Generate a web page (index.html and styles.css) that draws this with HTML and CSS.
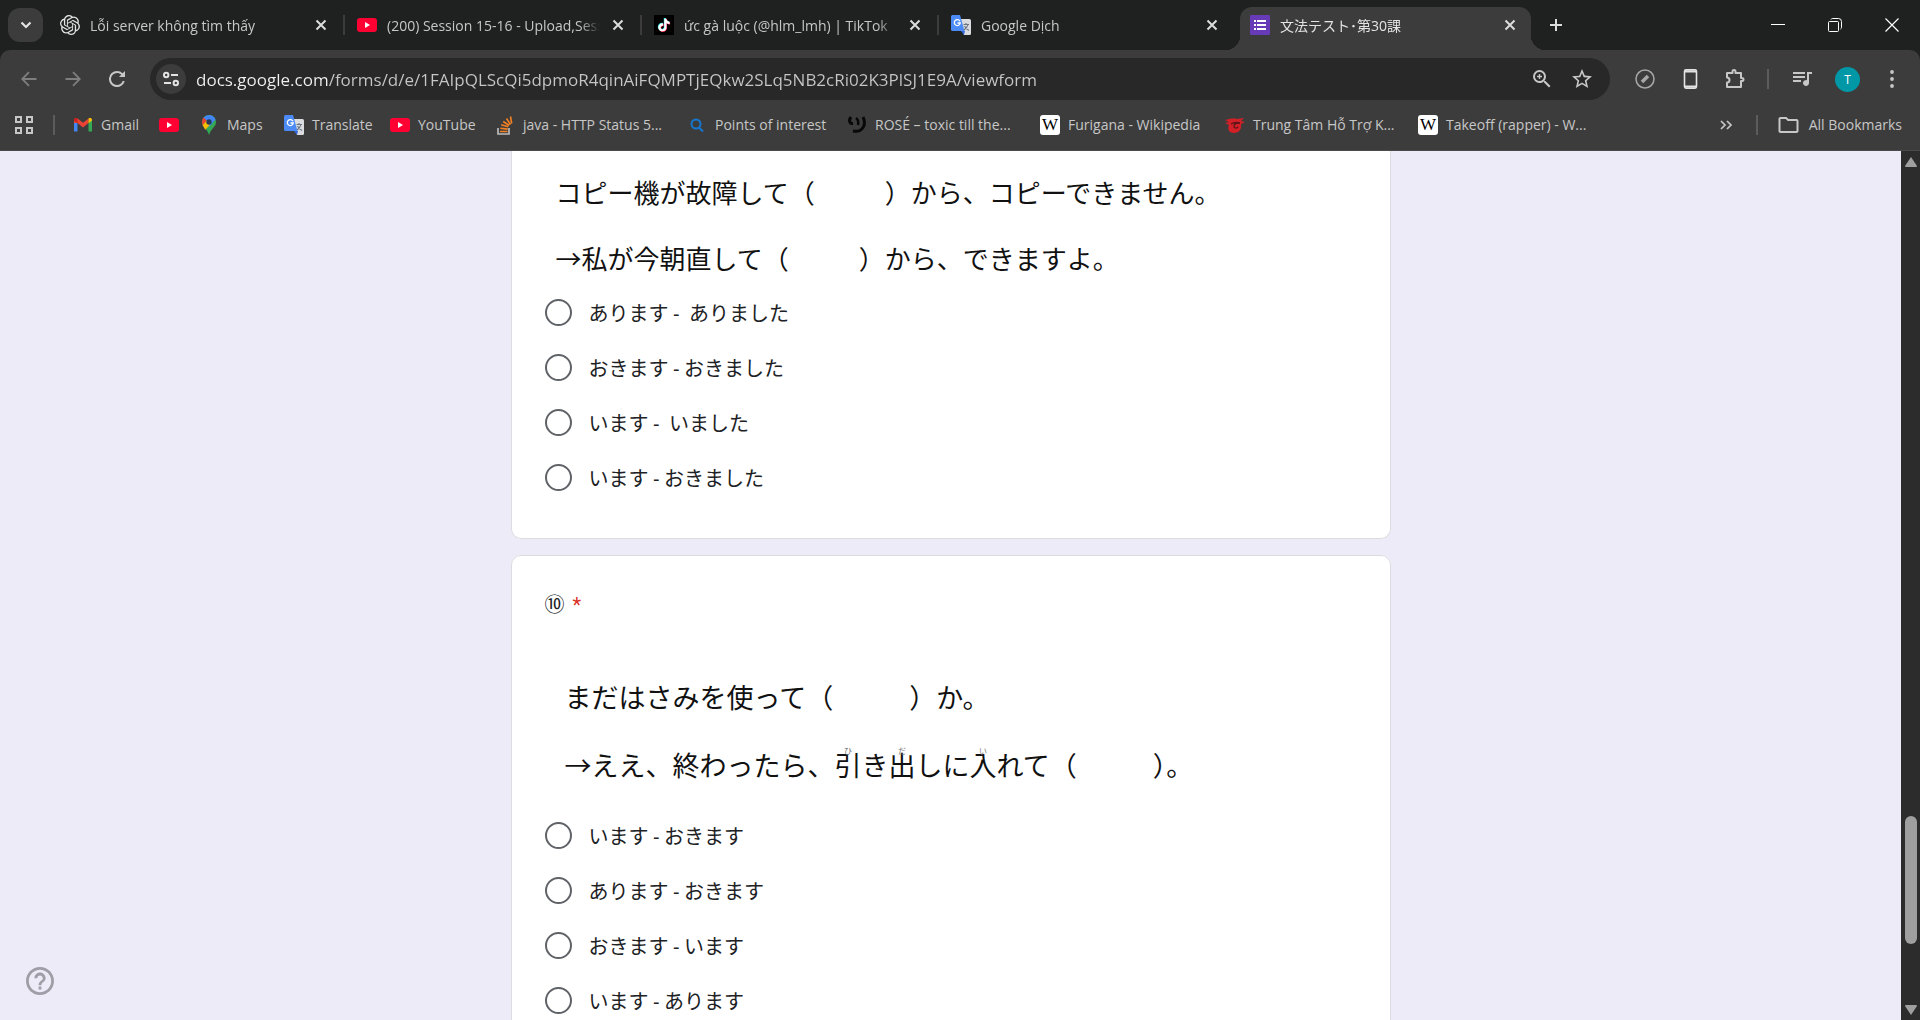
FILE: index.html
```html
<!DOCTYPE html>
<html lang="ja">
<head>
<meta charset="utf-8">
<meta name="viewport" content="width=device-width, initial-scale=1">
<title>文法テスト･第30課</title>
<link rel="stylesheet" href="styles.css">
</head>
<body>
<svg class="sprite" aria-hidden="true">
  <symbol id="close" viewBox="0 0 12 12"><path d="M1.500 1.500l9 9M10.500 1.500l-9 9" stroke="currentColor" stroke-width="2" fill="none"/></symbol>
  <symbol id="youtube" viewBox="0 0 20 20"><rect y="3" width="20" height="14" rx="3" fill="#ff0033"/><path d="M8 7l5 3-5 3z" fill="#fff"/></symbol>
  <symbol id="translate" viewBox="0 0 20 20"><path d="M8 4h10.500a1.500 1.500 0 0 1 1.500 1.500v13a1.500 1.500 0 0 1-1.500 1.500H13z" fill="#dadce0"/><path d="M10 16h4l-1 4z" fill="#3367d6"/><path d="M1.500 0H9l4.500 16h-12A1.500 1.500 0 0 1 0 14.500v-13A1.500 1.500 0 0 1 1.500 0z" fill="#4c8bf5"/><path d="M9 6.200A3 3 0 1 0 9.300 8H6.500" fill="none" stroke="#fff" stroke-width="1.300"/><path d="M12.500 9.500h5.500M15 8v1.500M17 9.500c-.5 2.500-2 4-4 5.500M13.500 11c1 2 2.500 3.500 4.500 4.500" fill="none" stroke="#6b7580" stroke-width="1.100"/></symbol>
  <symbol id="note" viewBox="0 0 24 24"><path fill="currentColor" d="M12.525 0h3.900c.1 1.500.650 3.100 1.760 4.200 1.100 1.100 2.700 1.600 4.240 1.800v4c-1.440 0-2.900-.35-4.200-1-.57-.250-1.100-.6-1.620-.9v8.750c-.1 1.400-.55 2.800-1.350 3.900-1.300 1.900-3.600 3.200-5.900 3.200-1.400.1-2.860-.3-4.100-1-2-1.200-3.400-3.400-3.650-5.700v-1.500c.2-1.900 1.100-3.700 2.600-5 1.650-1.400 4-2.100 6.150-1.700v4.400c-1-.3-2.150-.2-3 .4-.6.400-1.100 1-1.360 1.750-.2.500-.15 1-.14 1.600.24 1.600 1.800 3 3.500 2.900 1.100 0 2.200-.7 2.800-1.600.2-.3.4-.7.4-1.100.1-1.800.070-3.600.070-5.400z"/></symbol>
</svg>
<header class="browser">
  <div class="tabstrip">
    <button class="tab-search" aria-label="Search tabs"><svg width="12" height="8" viewBox="0 0 12 8"><path d="M1.500 1.500L6 6l4.500-4.500" fill="none" stroke="currentColor" stroke-width="2.200"/></svg></button>
    <div class="tab tab-first">
      <svg class="fav" viewBox="0 0 24 24"><path fill="#e3e3e3" d="M22.282 9.821a5.985 5.985 0 0 0-.516-4.911 6.046 6.046 0 0 0-6.510-2.900A6.065 6.065 0 0 0 4.981 4.182a5.985 5.985 0 0 0-3.998 2.900 6.046 6.046 0 0 0 .743 7.097 5.980 5.980 0 0 0 .511 4.911 6.051 6.051 0 0 0 6.515 2.900A5.985 5.985 0 0 0 13.260 24a6.056 6.056 0 0 0 5.772-4.206 5.989 5.989 0 0 0 3.998-2.900 6.056 6.056 0 0 0-.748-7.073zm-9.022 12.608a4.476 4.476 0 0 1-2.876-1.041l.142-.080 4.778-2.758a.795.795 0 0 0 .393-.681v-6.737l2.020 1.169a.071.071 0 0 1 .038.052v5.583a4.504 4.504 0 0 1-4.495 4.494zm-9.661-4.125a4.471 4.471 0 0 1-.535-3.014l.142.085 4.783 2.758a.771.771 0 0 0 .781 0l5.843-3.369v2.332a.080.080 0 0 1-.033.062L9.740 19.950a4.499 4.499 0 0 1-6.141-1.646zM2.341 7.896a4.485 4.485 0 0 1 2.366-1.973V11.600a.766.766 0 0 0 .388.677l5.814 3.354-2.020 1.169a.076.076 0 0 1-.071 0l-4.830-2.787A4.504 4.504 0 0 1 2.341 7.872zm16.596 3.856L13.104 8.364 15.119 7.200a.076.076 0 0 1 .071 0l4.830 2.791a4.494 4.494 0 0 1-.677 8.104v-5.677a.790.790 0 0 0-.407-.667zm2.011-3.023l-.142-.085-4.774-2.782a.776.776 0 0 0-.785 0L9.409 9.230V6.897a.066.066 0 0 1 .028-.062l4.830-2.787a4.499 4.499 0 0 1 6.680 4.660zM8.307 12.863l-2.020-1.164a.080.080 0 0 1-.038-.057V6.074a4.499 4.499 0 0 1 7.376-3.454l-.142.081L8.704 5.459a.795.795 0 0 0-.393.681zm1.098-2.365l2.602-1.500 2.607 1.500v2.999l-2.597 1.500-2.607-1.500z"/></svg>
      <button class="tab-title">Lỗi server không tìm thấy</button>
      <button class="tab-close" aria-label="Close tab"><svg><use href="#close"/></svg></button>
    </div>
    <div class="tab">
      <svg class="fav"><use href="#youtube"/></svg>
      <button class="tab-title">(200) Session 15-16 - Upload,Session</button>
      <button class="tab-close" aria-label="Close tab"><svg><use href="#close"/></svg></button>
    </div>
    <div class="tab">
      <svg class="fav" viewBox="0 0 20 20"><rect width="20" height="20" fill="#000"/><use href="#note" x="3" y="3" width="13" height="13" color="#25f4ee"/><use href="#note" x="4" y="4" width="13" height="13" color="#fe2c55"/><use href="#note" x="3.500" y="3.500" width="13" height="13" color="#fff"/></svg>
      <button class="tab-title">ức gà luộc (@hlm_lmh) | TikTok</button>
      <button class="tab-close" aria-label="Close tab"><svg><use href="#close"/></svg></button>
    </div>
    <div class="tab tab-last">
      <svg class="fav"><use href="#translate"/></svg>
      <button class="tab-title">Google Dịch</button>
      <button class="tab-close" aria-label="Close tab"><svg><use href="#close"/></svg></button>
    </div>
    <div class="tab tab-active">
      <svg class="fav" viewBox="0 0 20 20"><rect width="20" height="20" rx="1" fill="#673ab7"/><path d="M4 5h2v2H4zM7 5h9v2H7zM4 9h2v2H4zM7 9h9v2H7zM4 13h2v2H4zM7 13h9v2H7z" fill="#fff"/></svg>
      <button class="tab-title">文法テスト･第30課</button>
      <button class="tab-close" aria-label="Close tab"><svg><use href="#close"/></svg></button>
    </div>
    <button class="new-tab" aria-label="New tab"><svg width="14" height="14" viewBox="0 0 14 14"><path d="M7 1v12M1 7h12" stroke="currentColor" stroke-width="2"/></svg></button>
    <div class="window-controls">
      <button aria-label="Minimize"><svg viewBox="0 0 14 14"><path d="M0 6.500h14" stroke="currentColor"/></svg></button>
      <button aria-label="Restore"><svg viewBox="0 0 14 14" fill="none" stroke="currentColor"><rect x=".5" y="3.500" width="10" height="10" rx="1"/><path d="M3 1.500q.5-1 1.500-1h6a3 3 0 0 1 3 3v6q0 1-1 1.500"/></svg></button>
      <button aria-label="Close"><svg viewBox="0 0 14 14"><path d="M.5.5l13 13M13.500.5l-13 13" stroke="currentColor" stroke-width="1.200"/></svg></button>
    </div>
  </div>
  <div class="toolbar">
    <button class="nav dim" aria-label="Back"><svg viewBox="0 0 16 16"><path d="M15.500 8H1.500M8 1.200L1.200 8 8 14.800" fill="none" stroke="currentColor" stroke-width="1.800"/></svg></button>
    <button class="nav dim" aria-label="Forward"><svg viewBox="0 0 16 16"><path d="M.5 8h14M8 1.200L14.800 8 8 14.800" fill="none" stroke="currentColor" stroke-width="1.800"/></svg></button>
    <button class="nav" aria-label="Reload"><svg viewBox="4 4 16 16"><path fill="currentColor" d="M17.650 6.350A7.960 7.960 0 0 0 12 4a8 8 0 1 0 7.730 10h-2.080A6 6 0 1 1 12 6c1.660 0 3.140.690 4.220 1.780L14 10h6V4z"/></svg></button>
    <div class="omnibox">
      <button class="site-info" aria-label="View site information"><svg width="16" height="16" viewBox="0 0 16 16" fill="none" stroke="currentColor" stroke-width="2"><circle cx="3.200" cy="4" r="2.200"/><path d="M8 4h7"/><circle cx="12.800" cy="12" r="2.200"/><path d="M1 12h7"/></svg></button>
      <input class="url" type="text" aria-label="Address" value="docs.google.com/forms/d/e/1FAIpQLScQi5dpmoR4qinAiFQMPTjEQkw2SLq5NB2cRi02K3PlSJ1E9A/viewform" spellcheck="false">
      <button class="tool" aria-label="Zoom"><svg viewBox="2 2 20 20"><path fill="currentColor" d="M15.500 14h-.790l-.280-.270A6.470 6.470 0 0 0 16 9.500 6.500 6.500 0 1 0 9.500 16c1.610 0 3.090-.590 4.230-1.570l.270.280v.790l5 4.990L20.490 19zm-6 0a4.500 4.500 0 1 1 0-9 4.500 4.500 0 0 1 0 9zM10.200 7H8.800v1.800H7v1.400h1.800V12h1.400v-1.800H12V8.800h-1.800z"/></svg></button>
      <button class="tool" aria-label="Bookmark this page"><svg viewBox="2 2 20 20"><path fill="currentColor" d="M22 9.240l-7.190-.620L12 2 9.190 8.630 2 9.240l5.460 4.730L5.820 21 12 17.270 18.180 21l-1.630-7.030zM12 15.400l-3.760 2.270 1-4.280-3.320-2.880 4.380-.380L12 6.100l1.710 4.040 4.380.380-3.320 2.880 1 4.280z"/></svg></button>
    </div>
    <button class="ext" aria-label="Extension"><svg viewBox="0 0 20 20" fill="none" stroke="#a8a8a8"><circle cx="10" cy="10" r="9" stroke-width="1.500"/><path d="M7 13l6-6" stroke-width="3.500"/></svg></button>
    <button class="ext" aria-label="Device"><svg viewBox="0 0 20 20" fill="none" stroke="#e3e3e3"><rect x="4.500" y=".9" width="12" height="18.200" rx="1.500" stroke-width="1.600"/><path d="M4.500 2.500h12M4.500 17.500h12" stroke-width="2"/></svg></button>
    <button class="ext" aria-label="Extensions"><svg viewBox="0 0 20 20" fill="none" stroke="currentColor" stroke-width="2"><path d="M2 4h5.500V2.500a1.500 1.500 0 0 1 3 0V4H16v5h1a1.500 1.500 0 0 1 0 3h-1v6H2v-4.500a2.500 2.500 0 0 0 0-5z" stroke-linejoin="round"/></svg></button>
    <span class="divider"></span>
    <button class="ext" aria-label="Media"><svg viewBox="2 2 20 20"><path fill="currentColor" d="M15 5H3v2h12zm0 4H3v2h12zM3 15h8v-2H3zM17 5v8.180a3 3 0 1 0 2 2.820V7h3V5z"/></svg></button>
    <button class="avatar" aria-label="Profile">T</button>
    <button class="menu" aria-label="Menu"><svg width="4" height="18" viewBox="0 0 4 18" fill="currentColor"><circle cx="2" cy="2" r="1.900"/><circle cx="2" cy="9" r="1.900"/><circle cx="2" cy="16" r="1.900"/></svg></button>
  </div>
  <nav class="bookmarks" aria-label="Bookmarks">
    <button class="apps" aria-label="Apps"><svg width="18" height="18" viewBox="0 0 18 18" fill="none" stroke="currentColor" stroke-width="2"><path d="M1 1h5v5H1zM12 1h5v5h-5zM1 12h5v5H1zM12 12h5v5h-5z"/></svg></button>
    <span class="divider"></span>
    <div class="links">
      <a href="#"><svg viewBox="0 0 20 20"><path d="M1 4.500v12h3.500V8z" fill="#4285f4"/><path d="M19 4.500v12h-3.500V8z" fill="#34a853"/><path d="M1 8V5c0-2 2-2.500 3.500-1.500L10 7.800l5.500-4.300v4.600L10 12.400 4.500 8.100z" fill="#ea4335"/><path d="M15.500 3.500C17 2.500 19 3 19 5v.5l-3.500 2.800z" fill="#fbbc04"/><path d="M4.500 3.500C3 2.500 1 3 1 5v.5l3.500 2.800z" fill="#c5221f"/></svg><span>Gmail</span></a>
      <a href="#" aria-label="YouTube"><svg><use href="#youtube"/></svg></a>
      <a href="#"><svg viewBox="0 0 20 20"><path d="M10 0a7 7 0 0 1 7 7c0 5-5 6-7 13-2-7-7-8-7-13a7 7 0 0 1 7-7z" fill="#34a853"/><path d="M10 0a7 7 0 0 1 6.500 4.500L10 12 4.600 2.500A7 7 0 0 1 10 0z" fill="#4285f4"/><path d="M4.700 2.500L8 6l-4.300 4.200C3 9 2.500 5 4.700 2.500z" fill="#ea4335"/><path d="M3.700 10.200l4.300-5 3 4.500-4.800 5z" fill="#fbbc04"/><circle cx="10" cy="7" r="2.700" fill="#263a55"/></svg><span>Maps</span></a>
      <a href="#"><svg><use href="#translate"/></svg><span>Translate</span></a>
      <a href="#"><svg><use href="#youtube"/></svg><span>YouTube</span></a>
      <a href="#"><svg viewBox="0 0 20 20" fill="none"><path d="M3 13v6h11v-6" stroke="#bcbbbb" stroke-width="1.700"/><path d="M5 16.500h7.500M5.300 13.300l7.400.8M6.200 9.800l7 2M8.200 6.500l6 4M11.500 3.500l4 6M15.500 1.500l1.200 7" stroke="#f48024" stroke-width="1.600"/></svg><span>java - HTTP Status 5...</span></a>
      <a href="#"><svg viewBox="0 0 20 20" fill="none" stroke="#1577d0" stroke-width="2"><circle cx="9" cy="9" r="4.500"/><path d="M12 12.500l4 4"/></svg><span>Points of interest</span></a>
      <a href="#"><svg viewBox="0 0 20 20" fill="none" stroke="#080808"><path d="M4 2C1 6 3 9 6 8.500" stroke-width="3"/><path d="M9 3q3 2 2 7" stroke-width="2.500"/><path d="M16 2c4 8-1 16-10 14" stroke-width="3"/></svg><span>ROSÉ – toxic till the...</span></a>
      <a href="#"><i class="wiki">W</i><span>Furigana - Wikipedia</span></a>
      <a href="#"><svg viewBox="0 0 20 20"><path d="M0 5c4-1 8-2 12-1l7-1-3 3 4 1-4 2c1 6-3 9-7 9-5 0-7-4-5-8L0 8l4-1z" fill="#d32027"/><path d="M6 9c3-2 6-2 9-1-4 0-6 1-6 3s2 3 4 1" fill="none" stroke="#5c1518" stroke-width="1.300"/></svg><span>Trung Tâm Hỗ Trợ K...</span></a>
      <a href="#"><i class="wiki">W</i><span>Takeoff (rapper) - W...</span></a>
    </div>
    <button class="more" aria-label="More bookmarks"><svg width="12" height="10" viewBox="0 0 12 10"><path d="M1 1l4 4-4 4M7 1l4 4-4 4" fill="none" stroke="currentColor" stroke-width="1.700"/></svg></button>
    <span class="divider"></span>
    <a class="all" href="#"><svg viewBox="1.500 3 21 18"><path fill="currentColor" d="M9.170 6l2 2H20v10H4V6h5.170M10 4H4c-1.100 0-2 .9-2 2v12c0 1.100.9 2 2 2h16c1.100 0 2-.9 2-2V8c0-1.100-.9-2-2-2h-8l-2-2z"/></svg><span>All Bookmarks</span></a>
  </nav>
</header>
<div class="viewport">
  <main class="page">
    <form class="form">
      <fieldset class="card card-cut" aria-label="⑨">
        <div class="prompt prompt-small">
          <p>コピー機が故障して（<span class="blank"></span>）から、コピーできません。</p>
          <p>→私が今朝直して（<span class="blank"></span>）から、できますよ。</p>
        </div>
        <div class="options">
          <label><input type="radio" name="q9">あります -&nbsp; ありました</label>
          <label><input type="radio" name="q9">おきます - おきました</label>
          <label><input type="radio" name="q9">います -&nbsp; いました</label>
          <label><input type="radio" name="q9">います - おきました</label>
        </div>
      </fieldset>
      <fieldset class="card" aria-label="⑩">
        <h2 class="question">⑩ <span class="required">*</span></h2>
        <div class="prompt prompt-large">
          <p>まだはさみを使って（<span class="blank"></span>）か。</p>
          <p>→ええ、終わったら、<ruby>引<rt>ひ</rt></ruby>き<ruby>出<rt>だ</rt></ruby>しに<ruby>入<rt>い</rt></ruby>れて（<span class="blank"></span>）。</p>
        </div>
        <div class="options">
          <label><input type="radio" name="q10">います - おきます</label>
          <label><input type="radio" name="q10">あります - おきます</label>
          <label><input type="radio" name="q10">おきます - います</label>
          <label><input type="radio" name="q10">います - あります</label>
        </div>
      </fieldset>
    </form>
    <button class="help" aria-label="Help"><svg width="28" height="28" viewBox="2 2 20 20"><path fill="currentColor" d="M11 18h2v-2h-2v2zm1-16C6.480 2 2 6.480 2 12s4.480 10 10 10 10-4.480 10-10S17.520 2 12 2zm0 18c-4.410 0-8-3.590-8-8s3.590-8 8-8 8 3.590 8 8-3.590 8-8 8zm0-14c-2.210 0-4 1.790-4 4h2c0-1.100.9-2 2-2s2 .9 2 2c0 2-3 1.750-3 5h2c0-2.250 3-2.500 3-5 0-2.210-1.790-4-4-4z"/></svg></button>
  </main>
  <div class="scrollbar" aria-hidden="true">
    <svg width="12" height="10" viewBox="0 0 12 10"><path d="M6 0l6 9q0 1-1 1H1Q0 10 0 9z" fill="#9f9f9f"/></svg>
    <div class="track"><div class="thumb"></div></div>
    <svg width="12" height="10" viewBox="0 0 12 10"><path d="M6 10l6-9q0-1-1-1H1Q0 0 0 1z" fill="#9f9f9f"/></svg>
  </div>
</div>
</body>
</html>
```
FILE: styles.css
```css
* { box-sizing: border-box; }
body {
  margin: 0;
  height: 100vh;
  display: flex;
  flex-direction: column;
  overflow: hidden;
  font-family: "Open Sans", "Noto Sans CJK JP", sans-serif;
  font-size: 14px;
  color: #c7c7c7;
  background: #1f2020;
}
button {
  padding: 0;
  border: 0;
  background: none;
  color: inherit;
  font: inherit;
  display: flex;
  align-items: center;
  justify-content: center;
  flex: none;
}
a { color: inherit; text-decoration: none; }
svg { display: block; flex: none; }
.sprite { position: absolute; width: 0; height: 0; }
.browser { flex: none; }

/* Tab strip */
.tabstrip { display: flex; height: 50px; padding-left: 8px; }
.tab-search {
  width: 35px;
  height: 34px;
  margin: 8px 5px 0 0;
  border-radius: 12px;
  background: #3c3c3c;
  color: #e3e3e3;
}
.tab {
  position: relative;
  display: flex;
  align-items: center;
  gap: 10px;
  flex: 0 1 297px;
  min-width: 0;
  height: 43px;
  margin-top: 7px;
  padding: 0 16px 7px 12px;
}
.tab::after {
  content: "";
  position: absolute;
  right: 0;
  top: 8px;
  width: 2px;
  height: 20px;
  background: #3c3c3c;
}
.tab-last::after { display: none; }
.fav { width: 20px; height: 20px; }
.tab-title {
  flex: 1;
  min-width: 0;
  justify-content: flex-start;
  overflow: hidden;
  white-space: nowrap;
  -webkit-mask-image: linear-gradient(to left, transparent, #000 20px);
  mask-image: linear-gradient(to left, transparent, #000 20px);
}
.tab-close { width: 16px; height: 16px; color: #dcdcdc; }
.tab-close svg { width: 12px; height: 12px; }
.tab-active {
  flex-basis: 291px;
  margin-left: 4px;
  padding-left: 10px;
  padding-right: 13px;
  border-radius: 12px 12px 0 0;
  background: #3c3c3c;
  color: #e3e3e3;
}
.tab-active::before,
.tab-active::after {
  content: "";
  position: absolute;
  top: auto;
  bottom: 0;
  width: 14px;
  height: 14px;
  background: radial-gradient(circle at 0 0, transparent 14px, #3c3c3c 14px);
}
.tab-active::before { left: -14px; }
.tab-active::after {
  right: -14px;
  background: radial-gradient(circle at 100% 0, transparent 14px, #3c3c3c 14px);
}
.new-tab { width: 34px; margin-left: 8px; color: #dcdcdc; }
.window-controls { display: flex; margin-left: auto; color: #fff; }
.window-controls button { width: 57px; }
.window-controls svg { width: 14px; height: 14px; }

/* Toolbar */
.toolbar {
  display: flex;
  align-items: center;
  height: 58px;
  padding: 0 6px 0 7px;
  border-radius: 10px 10px 0 0;
  background: #3c3c3c;
}
.nav { width: 44px; height: 40px; color: #c7c7c7; }
.nav svg { width: 16px; height: 16px; }
.dim { color: #7e7e7e; }
.omnibox {
  flex: 1;
  min-width: 0;
  display: flex;
  align-items: center;
  height: 42px;
  margin: 0 12px 0 11px;
  padding: 0 8px 0 6px;
  border-radius: 21px;
  background: #282828;
}
.site-info {
  width: 30px;
  height: 30px;
  border-radius: 50%;
  background: #3c3c3c;
  color: #e3e3e3;
}
.url {
  flex: 1;
  min-width: 0;
  height: 30px;
  padding: 0 0 0 10px;
  border: 0;
  outline: 0;
  font: 17px "Open Sans", sans-serif;
  color: transparent;
  background: linear-gradient(to right, #f2f2f2 142px, #c7c7c7 142px);
  -webkit-background-clip: text;
  background-clip: text;
}
.tool { width: 40px; height: 40px; }
.tool svg, .ext svg { width: 20px; height: 20px; }
.ext { width: 45px; height: 40px; }
.divider { width: 2px; height: 20px; background: #5c5c5c; flex: none; }
.toolbar .divider { margin: 0 10px; }
.avatar {
  width: 25px;
  height: 25px;
  margin: 0 10px 0 11px;
  border-radius: 50%;
  background: #0097a7;
  color: #fff;
  font-size: 12px;
}
.menu { width: 44px; height: 40px; }

/* Bookmarks bar */
.bookmarks {
  display: flex;
  align-items: center;
  height: 43px;
  padding: 0 18px 9px 15px;
  background: #3c3c3c;
  border-bottom: 1px solid #4a4a4a;
}
.apps { width: 18px; height: 18px; }
.bookmarks .divider { margin-left: 20px; }
.links {
  flex: 1;
  min-width: 0;
  display: grid;
  grid-template-columns: 86px 40px 85px 106px 105px 192px 160px 193px 185px 193px auto;
  margin-left: 18px;
  overflow: hidden;
  white-space: nowrap;
}
.links a, .all { display: flex; align-items: center; gap: 8px; flex: none; }
.links svg, .wiki { width: 20px; height: 20px; }
.wiki {
  border-radius: 3px;
  background: #fff;
  color: #000;
  font: 17px/20px "Liberation Serif", serif;
  text-align: center;
}
.more { width: 20px; height: 20px; }
.all { margin-left: 20px; gap: 10px; }
.all svg { width: 21px; height: 18px; }

/* Page */
.viewport { flex: 1; min-height: 0; display: flex; }
.page {
  position: relative;
  flex: 1;
  min-width: 0;
  overflow: hidden;
  background: #eeebf8;
  color: #202124;
  font-family: Roboto, "Noto Sans CJK JP", sans-serif;
}
.form {
  display: flex;
  flex-direction: column;
  gap: 16px;
  width: 46%;
  min-width: 880px;
  margin: 0 auto;
}
.card {
  margin: 0;
  min-width: 0;
  padding: 33px;
  border: 1px solid #dadce0;
  border-radius: 10px;
  background: #fff;
}
.card-cut {
  padding-top: 28px;
  border-top: 0;
  border-radius: 0 0 10px 10px;
}
.question {
  margin: 0;
  font-size: 20px;
  font-weight: 400;
  line-height: 32px;
}
.required { margin-left: 3px; color: #d93025; }
.prompt {
  display: flex;
  flex-direction: column;
  gap: 40px;
  font-family: "Noto Sans CJK JP", sans-serif;
  color: #111;
  white-space: nowrap;
}
.prompt p { margin: 0; }
.blank { display: inline-block; }
.prompt-small { padding: 0 0 14px 11px; font-size: 26px; line-height: 26px; }
.prompt-small .blank { width: 70px; }
.prompt-large { padding: 62px 0 29px 20px; font-size: 27px; line-height: 28px; }
.prompt-large .blank { width: 76px; }
ruby { position: relative; display: inline-block; }
rt {
  position: absolute;
  top: -4px;
  left: 0;
  width: 100%;
  font-size: 8px;
  line-height: 8px;
  text-align: center;
  color: #777;
}
.options { font-size: 20px; }
.options label {
  display: flex;
  align-items: center;
  gap: 17px;
  height: 55px;
}
.options input {
  appearance: none;
  flex: none;
  width: 27px;
  height: 27px;
  margin: 0;
  border: 2px solid #5f6368;
  border-radius: 50%;
}
.help {
  position: absolute;
  left: 26px;
  bottom: 25px;
  color: #9f9ea6;
}
.scrollbar {
  flex: none;
  width: 19px;
  padding: 6px 0 5px;
  display: flex;
  flex-direction: column;
  align-items: center;
  background: #2c2c2c;
}
.track {
  flex: 1;
  display: flex;
  flex-direction: column;
  justify-content: flex-end;
  padding-bottom: 61px;
}
.thumb { width: 12px; height: 128px; border-radius: 6px; background: #9f9f9f; }
```
